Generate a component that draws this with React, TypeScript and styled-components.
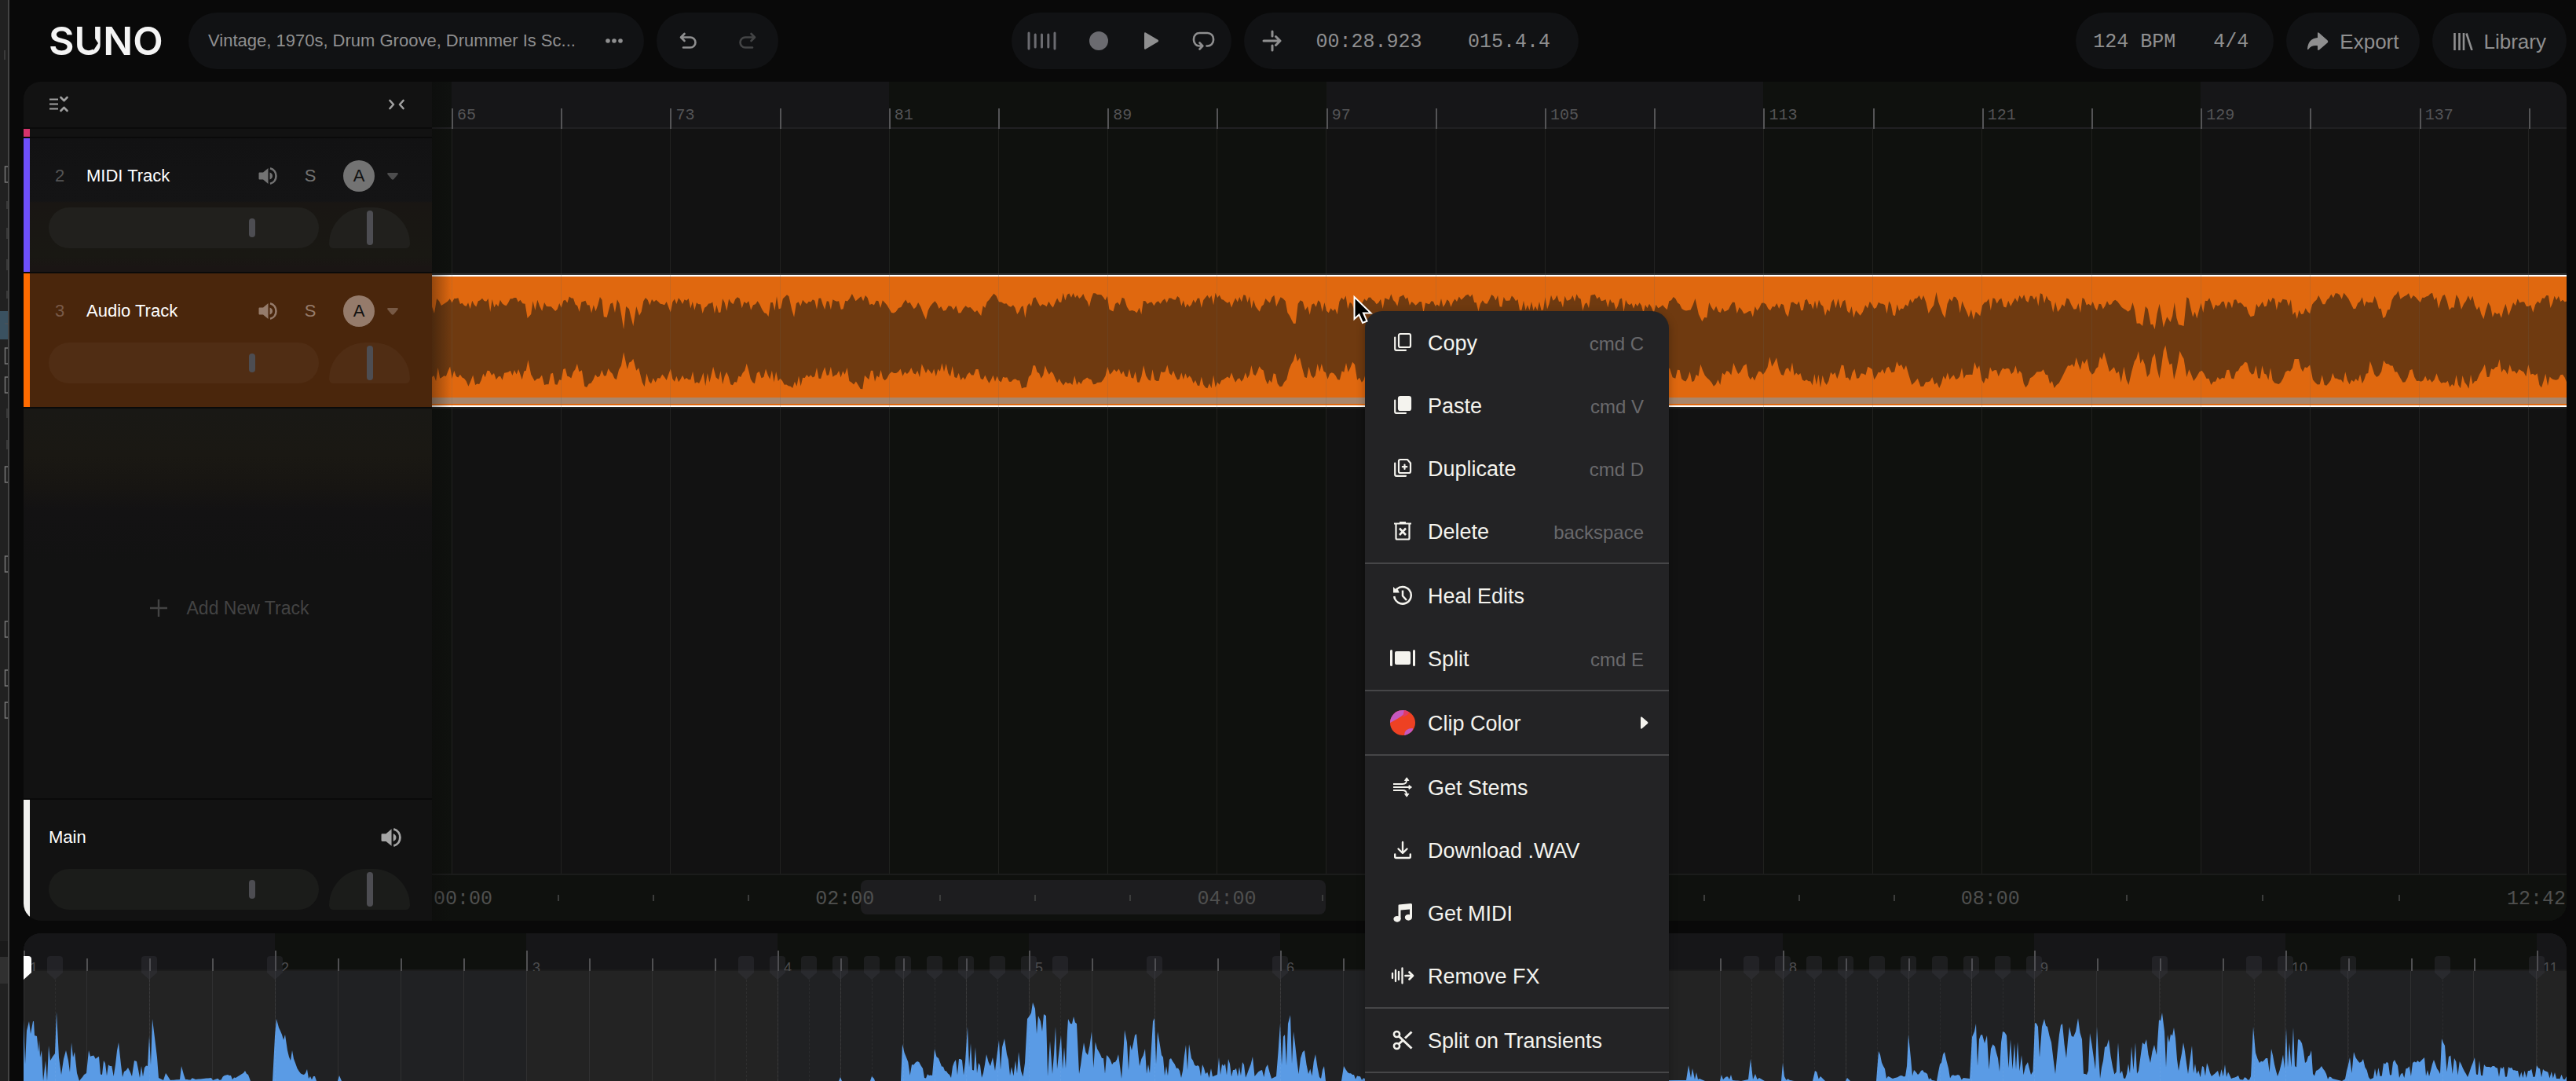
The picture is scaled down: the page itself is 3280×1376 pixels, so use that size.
import React from "react";
import styled, { createGlobalStyle, css } from "styled-components";

const sans = `"Liberation Sans", Arial, sans-serif`;
const mono = `"Liberation Mono", "Courier New", monospace`;

const GlobalStyle = createGlobalStyle`
  *, *::before, *::after { box-sizing: border-box; }
  body { margin: 0; background: #090909; font-family: ${sans}; }
  button { font: inherit; color: inherit; background: none; border: 0; padding: 0; cursor: pointer; }
  svg { display: block; }
`;

/* ---------- waveform data ---------- */

type Point = [number, number];

const read = (text: string, offset = 0, ratio = 1): Point[] =>
  text.trim().split(/\s+/).map((pair) => {
    const [x, y] = pair.split(":").map(Number);
    return [offset + x * ratio, y];
  });

const noise = (n: number) => {
  const s = Math.sin(n * 12.9898) * 43758.5453;
  return s - Math.floor(s);
};

const CLIP_TOP: Point[] = [
  ...read(
    `0:150 13:150 25:130 50:120 70:150 90:130 120:140 160:125 168:140 172:195 178:180 181:130 200:135 215:160 235:125 275:145 296:125 299:190 304:192 310:140 325:140 332:238 336:150 341:160 344:190 348:225 353:150 358:185 365:130 400:145 440:120 470:150 500:135 525:120 540:130 555:130 566:175 580:135 607:112 612:165 630:125 690:130 708:120 712:102 718:130 727:112 745:140 770:145 785:170 798:135 815:160 822:135 835:200 842:150 850:130 860:150 868:165 877:150 893:175 905:155 920:165 940:125 952:110 965:140 980:145 990:170 1010:150 1017:115 1025:150 1050:135 1070:105 1090:120 1130:115 1150:140 1165:120 1178:165 1190:155 1200:130 1225:140 1250:125 1270:140 1310:108 1330:125 1350:118 1380:125 1390:170 1400:120 1425:115 1433:130 1440:185 1450:215 1454:140 1470:150 1498:135 1505:175 1530:125 1568:130`,
    -10, 0.7653
  ),
  ...read(
    `1200:130 1232:114 1250:138 1270:142 1305:132 1322:114 1335:140 1352:112 1380:130 1410:132 1430:122 1460:118 1468:140 1478:106 1500:122 1525:145 1550:140 1567:145`
  ),
  ...read(
    `0:155 18:120 40:165 52:120 58:180 64:208 76:135 92:170 120:135 140:175 155:150 185:150 200:140 212:190 217:135 265:125 283:170 290:122 310:125 336:185 345:145 375:140 410:160 430:120 445:108 458:160 467:95 478:180 490:120 515:150 535:170 550:135 575:125 595:150 618:105 625:135 632:110 660:125 680:160 695:122 708:160 722:122 740:155 775:125 797:170 805:135 812:215 822:225 827:150 831:160 836:220 843:238 851:140 858:230 864:190 870:210 877:135 884:220 893:225 898:115 912:170 937:118 955:145 990:135 1008:190 1014:185 1018:140 1070:125 1095:180 1125:108 1172:108 1185:160 1200:115 1225:130 1236:195 1255:110 1280:100 1300:135 1317:102 1335:130 1342:105 1358:155 1362:105 1375:140 1390:110 1405:180 1417:135 1432:180 1447:140 1452:185 1460:135 1490:145 1510:118 1552:130`,
    1570, 0.7398
  ),
];

const CLIP_BOTTOM: Point[] = [
  ...read(
    `0:420 13:420 60:410 70:435 85:450 105:395 120:430 157:390 163:430 173:355 178:410 184:435 200:450 225:430 258:400 267:455 285:410 310:400 320:430 332:325 338:390 348:350 353:395 357:385 363:440 385:440 400:420 440:430 475:440 481:380 490:430 520:440 540:395 550:445 565:420 620:455 640:420 700:410 726:465 740:430 770:425 778:400 800:400 835:405 865:400 900:430 918:390 930:430 980:430 998:460 1010:410 1040:410 1060:440 1086:450 1110:430 1130:430 1148:390 1160:410 1190:440 1197:375 1205:430 1240:405 1270:425 1300:460 1330:430 1350:440 1393:390 1400:430 1420:445 1435:430 1443:370 1453:360 1465:420 1490:400 1520:430 1541:385 1560:440`,
    -10, 0.7653
  ),
  ...read(`1300:430 1400:420 1500:430 1560:410`),
  ...read(
    `8:385 18:425 50:435 65:395 80:440 95:450 110:400 130:400 140:370 147:430 165:400 188:365 200:410 212:385 240:435 278:450 300:405 330:425 353:385 360:430 385:380 395:400 415:375 425:450 435:425 445:455 460:420 472:462 490:430 525:410 537:390 545:430 585:390 600:400 621:460 640:400 655:410 670:462 690:390 722:370 735:410 759:350 765:400 785:440 790:380 798:450 808:360 822:350 830:420 843:330 851:425 858:320 865:345 876:430 886:320 893:350 898:420 910:435 920:400 940:450 955:430 975:425 1002:365 1010:410 1035:410 1060:440 1080:385 1105:385 1115:430 1135:450 1160:430 1200:445 1217:380 1225:420 1245:370 1260:400 1270:440 1290:420 1320:440 1340:440 1380:450 1397:435 1407:390 1415:420 1433:380 1450:410 1470:390 1490:410 1505:450 1530:430 1545:410 1552:440`,
    1570, 0.7398
  ),
];

const PEAKS: Point[] = read(`
0:78 4:64 7:76 9:60 12:76 13:76 14:58 17:57 19:37 20:52 21:30 23:39 25:0 28:26 30:0 32:45 34:26 37:31 40:35 42:88 45:30 48:8 51:28 54:39 57:26 61:49 63:30 65:37 68:10 71:0 77:8 80:10 83:39 87:32 94:30 102:26 110:19 117:21 121:49 124:21 128:12 133:17 138:6 141:26 144:25 148:4 150:19 154:17 158:19 160:57 164:79 167:55 170:30 172:4 178:1 181:10 187:1 199:2 201:19 204:8 219:2 239:4 241:1 260:8 270:4 282:13 286:8 289:0 317:0 320:57 322:79 325:68 329:59 333:59 336:39 340:26 342:39 346:23 351:12 357:8 361:15 365:6 371:6 373:0 400:0 402:7 405:0
1038:0 1040:5 1042:0 1078:0 1080:6 1083:3 1084:0 1117:0 1119:47 1124:30 1131:21 1138:25 1145:16 1153:7 1157:7 1160:41 1165:29 1173:13 1179:8 1185:24 1193:28 1199:24 1202:69 1206:48 1212:43 1216:23 1222:10 1226:34 1231:19 1234:30 1237:13 1242:52 1246:43 1249:54 1252:34 1258:18 1263:26 1267:37 1270:13 1275:23 1278:79 1281:83 1285:100 1288:92 1290:60 1292:83 1295:76 1297:63 1299:85 1302:83 1304:6 1307:51 1310:9 1314:69 1318:33 1321:58 1325:43 1329:63 1330:79 1333:73 1337:82 1341:73 1344:9 1350:49 1355:33 1360:63 1367:41 1375:29 1379:33 1386:21 1394:34 1398:3 1402:65 1405:49 1411:39 1417:60 1421:19 1428:41 1434:10 1438:76 1440:80 1444:63 1449:33 1455:19 1461:29 1468:16 1476:13 1480:46 1484:47 1487:29 1493:19 1501:21 1505:9 1512:16 1522:30 1528:19 1534:28 1540:14 1552:24 1558:9 1565:31 1570:9 1577:14 1584:21 1589:3 1595:6 1600:73 1606:59 1610:73 1613:84 1617:63 1621:29 1626:29 1631:39 1636:9 1645:34 1650:5 1656:19 1658:0 1678:0 1681:19 1686:11 1700:6 1708:3
2117:1 2120:20 2123:4 2125:16 2128:2 2130:11 2134:3 2141:0 2160:0 2162:8 2166:4 2174:8 2176:1 2187:0 2196:2 2199:28 2202:2 2205:9 2210:4 2217:0 2238:0 2240:23 2242:6 2249:1 2255:0 2278:0 2281:13 2288:6 2294:0 2320:0 2322:4 2326:0 2359:0 2362:38 2368:19 2374:6 2380:3 2390:7 2396:6 2398:19 2400:59 2403:29 2407:14 2412:8 2418:14 2424:9 2430:1 2436:0 2440:21 2446:37 2451:16 2455:7 2463:8 2470:4 2478:3 2481:56 2484:63 2486:73 2490:53 2494:59 2497:48 2500:58 2505:41 2510:44 2514:29 2520:63 2525:58 2530:53 2535:48 2539:50 2544:33 2549:19 2552:24 2556:8 2561:74 2565:69 2567:30 2570:69 2573:79 2577:69 2582:49 2587:9 2592:59 2596:73 2601:29 2605:69 2610:56 2613:63 2616:80 2621:53 2625:9 2631:61 2636:29 2640:69 2644:3 2650:43 2655:53 2660:18 2667:49 2672:13 2678:9 2684:44 2689:49 2693:13 2698:49 2703:53 2708:23 2713:46 2716:33 2719:78 2723:87 2726:63 2732:49 2738:68 2744:13 2750:49 2756:9 2761:45 2767:9 2774:19 2780:23 2786:6 2794:13 2803:21 2811:3 2820:7 2830:4 2836:6 2839:69 2842:36 2847:23 2855:29 2862:41 2870:6 2875:23 2881:67 2885:49 2890:68 2896:53 2901:48 2905:23 2913:39 2919:13 2926:19 2932:9 2940:3 2952:0 2958:13 2962:30 2967:37 2972:26 2979:28 2986:5 2994:16 3005:23 3019:27 3027:9 3042:23 3057:30 3063:6 3069:27 3077:9 3079:54 3083:45 3088:31 3095:29 3104:21 3112:5 3121:30 3133:21 3148:17 3164:18 3176:13 3191:13 3200:20 3210:13 3223:11 3238:6`);

/* Adds in-between samples so that the edge looks like audio, not like straight lines. */
const roughen = (points: Point[], every: number, shift: (y: number, n: number) => number): Point[] => {
  const out: Point[] = [];
  points.forEach((p, i) => {
    out.push(p);
    const next = points[i + 1];
    if (!next) return;
    const steps = Math.floor((next[0] - p[0]) / every);
    for (let s = 1; s < steps; s++) {
      const t = s / steps;
      const x = p[0] + (next[0] - p[0]) * t;
      out.push([x, shift(p[1] + (next[1] - p[1]) * t, noise(x))]);
    }
  });
  return out;
};

const toPath = (points: Point[]) => points.map(([x, y]) => `${x.toFixed(1)},${y.toFixed(1)}`).join(" ");

/* Mostly small shifts, with a deeper dip towards the centre line now and then. */
const clipEdge = (points: Point[], inward: number) =>
  roughen(points, 2.5, (y, n) => y + inward * (n > 0.82 ? 34 : (n - 0.4) * 44));
const clipShape = toPath([...clipEdge(CLIP_TOP, 1), ...clipEdge(CLIP_BOTTOM, -1).reverse()]);
const stemShape = toPath([
  [0, 0],
  ...roughen(PEAKS, 2, (y, n) => (y > 4 ? y * (n < 0.35 ? 0.3 : 0.75 + n * 0.35) : y)),
  [3238, 0],
]);

/* ---------- page frame ---------- */

const Page = styled.div`
  position: relative;
  display: grid;
  grid-template-columns: 12px minmax(0, 1fr);
  height: 100vh;
  overflow: hidden;
  background: #090909;
`;

const Edge = styled.div`
  background: #212121;
  border-right: 2px solid #444;
  overflow: hidden;
`;

const Studio = styled.main`
  display: grid;
  grid-template-rows: 104px minmax(0, 1fr) 188px;
  padding: 0 12px 0 18px;
  min-width: 0;
`;

const Header = styled.header`
  display: grid;
  grid-template-columns: 1fr auto 1fr;
  align-items: center;
  color: #8f8f90;
`;

const HeaderGroup = styled.div<{ $end?: boolean }>`
  display: flex;
  align-items: center;
  gap: 16px;
  justify-content: ${(p) => (p.$end ? "flex-end" : "flex-start")};
`;

const HeaderSpread = styled.div`
  flex: 1;
  display: flex;
  align-items: center;
  justify-content: space-between;
`;

const Logo = styled.a`
  position: relative;
  width: 146px;
  margin: 0 16px 0 32px;
  font: 600 50px/60px Inter, ${sans};
  color: #f4f4f4;
  text-decoration: none;
`;

const LogoCuts = styled.svg`
  position: absolute;
  inset: 0;
`;

const Pill = styled.div<{ $gap?: number; $pad?: string; $width?: number }>`
  display: flex;
  align-items: center;
  gap: ${(p) => p.$gap ?? 0}px;
  height: 72px;
  padding: ${(p) => p.$pad ?? "0 24px"};
  ${(p) => p.$width && css`width: ${p.$width}px;`}
  border-radius: 36px;
  background: #111214;
`;

const PillButton = styled.button`
  && {
    display: flex;
    align-items: center;
    gap: 14px;
    height: 72px;
    padding: 2px 26px 0;
    border-radius: 36px;
    background: #111214;
    font-size: 26px;
    line-height: 32px;
  }
`;

const IconButton = styled.button<{ $dim?: boolean }>`
  display: grid;
  place-items: center;
  flex: none;
  opacity: ${(p) => (p.$dim ? 0.4 : 1)};
`;

const Title = styled.span`
  flex: 1;
  min-width: 0;
  font-size: 22px;
  line-height: 32px;
  white-space: nowrap;
`;

const Readout = styled.span`
  padding-top: 3px;
  font: 25px/32px ${mono};
  white-space: pre;
`;

/* ---------- arrangement ---------- */

const Arrange = styled.section`
  display: grid;
  grid-template-columns: 520px minmax(0, 1fr);
  margin-bottom: 16px;
  border-radius: 22px;
  overflow: hidden;
  background: #121212;
`;

const Sidebar = styled.aside`
  display: flex;
  flex-direction: column;
  gap: 2px;
  min-height: 0;
  background: #0a0a0a;
`;

const SideHeader = styled.div`
  display: flex;
  align-items: center;
  justify-content: space-between;
  height: 58px;
  padding: 0 34px 0 32px;
  background: #121212;
  color: #a0a0a0;
`;

const Sliver = styled.div`
  height: 10px;
  border-left: 8px solid #d5336c;
  background: #121212;
`;

const Track = styled.article<{ $color: string; $bg?: string; $main?: boolean }>`
  border-left: 8px solid ${(p) => p.$color};
  background: ${(p) => p.$bg ?? "#121212"};
  height: ${(p) => (p.$main ? 154 : 170)}px;
  padding: 28px 28px 0 24px;
`;

const TrackTop = styled.div`
  display: flex;
  align-items: center;
  height: 40px;
  margin-bottom: 20px;
  color: #fff;
  font-size: 22px;
  line-height: 28px;
`;

const TrackNo = styled.span<{ $tint: string }>`
  width: 48px;
  padding-left: 8px;
  color: ${(p) => p.$tint};
`;

const TrackName = styled.span`
  flex: 1;
`;

const TrackTools = styled.div<{ $tint: string }>`
  display: flex;
  align-items: center;
  gap: 16px;
  padding-right: 15px;
  color: ${(p) => p.$tint};
`;

const MainTools = styled(TrackTools)`
  padding-right: 11px;
`;

const Solo = styled.button`
  width: 52px;
  text-align: center;
`;

const Arm = styled.button`
  && {
    width: 40px;
    height: 40px;
    border-radius: 50%;
    background: currentColor;
  }
  span { color: #111; font-size: 22px; }
`;

const TrackSliders = styled.div`
  display: flex;
  gap: 13px;
`;

const Slider = styled.input<{ $bg: string; $pan?: boolean }>`
  appearance: none;
  margin: 0;
  width: ${(p) => (p.$pan ? 103 : 344)}px;
  height: 52px;
  border-radius: ${(p) => (p.$pan ? "52px 52px 6px 6px" : "26px")};
  background: ${(p) => p.$bg};
  &::-webkit-slider-thumb {
    appearance: none;
    width: 8px;
    height: ${(p) => (p.$pan ? 44 : 24)}px;
    border-radius: 4px;
    background: #4d4d52;
  }
`;

const EmptyTracks = styled.div`
  flex: 1;
  display: grid;
  place-items: center;
  background: linear-gradient(#191815 0, #1a1813 60px, #171512 100px, #131213 130px, #121212 200px);
`;

const AddTrack = styled.button`
  && {
    display: flex;
    align-items: center;
    gap: 25px;
    margin-top: 12px;
    margin-left: 4px;
    color: #434343;
    font-size: 23px;
    line-height: 28px;
  }
`;

const Timeline = styled.div`
  position: relative;
  display: grid;
  grid-template-rows: 60px minmax(0, 1fr) 60px;
  min-width: 0;
`;

const EdgeShade = styled.div`
  position: absolute;
  inset: 0 auto 0 0;
  width: 25px;
  background: linear-gradient(90deg, rgba(10, 10, 10, 0.35), transparent);
  pointer-events: none;
`;

const Cells = styled.div<{ $cover?: boolean }>`
  display: flex;
  min-width: 0;
  ${(p) => p.$cover && css`position: absolute; inset: 0; pointer-events: none;`}
`;

const Lead = styled.div<{ $bg?: string; $line?: boolean }>`
  flex: none;
  width: 25px;
  background: ${(p) => p.$bg ?? "none"};
  ${(p) => p.$line && css`box-shadow: inset 0 -2px #202022;`}
`;

const BarCell = styled.div<{ $grow: number; $bg: string; $line?: string }>`
  flex: ${(p) => p.$grow} 0 0;
  min-width: 0;
  background: ${(p) => p.$bg};
  ${(p) => p.$line && css`border-left: 1px solid ${p.$line};`}
`;

const RulerCell = styled(BarCell)`
  padding-top: 34px;
  box-shadow: inset 0 -2px #202022;
`;

const RulerMark = styled.div`
  height: 26px;
  padding: 1px 0 0 5px;
  border-left: 2px solid #545456;
  color: #545456;
  font: 20px/16px ${mono};
`;

const Canvas = styled.div`
  position: relative;
  padding-top: 184px;
`;

const Lane = styled.div`
  position: relative;
  border-top: 2px solid #333;
  border-bottom: 2px solid #20211f;
`;

const Clip = styled.div`
  height: 168px;
  border: solid #fff;
  border-width: 2px 0;
  background: linear-gradient(#e0680f 154px, #a9866b 154px, #a9866b 162px, #e0680f 162px);
`;

const Overview = styled.div`
  position: relative;
  display: flex;
  align-items: center;
  border-top: 2px solid #1b1c1b;
  background: #0f110e;
  padding: 0 1px 0 2px;
`;

const View = styled.div`
  position: absolute;
  top: 6px;
  height: 44px;
  border-radius: 8px;
  background: #1d1d1f;
`;

const Minutes = styled.div<{ $last?: boolean }>`
  position: relative;
  flex: ${(p) => (p.$last ? 695 : 486)} 0 0;
  display: grid;
  align-items: center;
  grid-template-columns: ${(p) =>
    p.$last
      ? "auto 135fr 2px 172fr 2px 172fr 2px 136fr"
      : "auto 84fr 2px 120fr 2px 120fr 2px 85fr"};
`;

const Stamp = styled.span`
  position: relative;
  padding-top: 4px;
  font: 25px/32px ${mono};
  color: #4f504f;
`;

const Dash = styled.i<{ $col: number }>`
  grid-column: ${(p) => p.$col};
  height: 8px;
  background: #3c3d3c;
`;

/* ---------- clip editor ---------- */

const Editor = styled.section`
  position: relative;
  display: grid;
  grid-template-rows: 48px minmax(0, 1fr);
  border-radius: 22px 22px 0 0;
  overflow: hidden;
  background: #202123;
`;

const BeatCell = styled(BarCell)`
  display: flex;
  align-items: flex-end;
  box-shadow: inset 0 -2px #1c1c1c;
`;

const Beat = styled.div<{ $major: boolean }>`
  flex: 1;
  height: ${(p) => (p.$major ? 26 : 10)}px;
  padding: 16px 0 0 6px;
  border-left: 2px solid #505052;
  color: #4c4c4e;
  font: 18px/12px ${sans};
`;

const EditorBody = styled.div`
  position: relative;
`;

const Wave = styled.svg`
  position: absolute;
  left: 0;
  bottom: 0;
  width: 100%;
  height: 140px;
`;

const Marker = styled.div`
  position: absolute;
  top: 29px;
  bottom: 0;
  width: 20px;
  margin-left: -10px;
  color: rgba(70, 70, 80, 0.26);
  &::after {
    content: "";
    position: absolute;
    left: 10px;
    top: 30px;
    bottom: 0;
    border-left: 1px dashed rgba(255, 255, 255, 0.05);
  }
`;

const Playhead = styled.svg`
  position: absolute;
  left: 0;
  top: 29px;
`;

/* ---------- context menu ---------- */

const Menu = styled.div`
  position: absolute;
  left: 1738px;
  top: 396px;
  width: 387px;
  height: 1100px;
  border-radius: 22px;
  background: #232325;
  box-shadow: 0 4px 12px rgba(0, 0, 0, 0.3);
  overflow: hidden;
`;

const MenuGroup = styled.div`
  border-bottom: 2px solid #464648;
`;

const MenuItem = styled.button`
  && {
    display: flex;
    align-items: center;
    gap: 16px;
    width: 100%;
    height: 80px;
    padding: 0 32px;
    color: #f4f3ee;
    font-size: 27px;
    line-height: 32px;
    text-align: left;
  }
`;

const MenuIcon = styled.span`
  display: grid;
  place-items: center;
  width: 32px;
  height: 32px;
`;

const MenuText = styled.span`
  flex: 1;
  padding-top: 2px;
  white-space: nowrap;
`;

const Shortcut = styled.kbd`
  padding-top: 3px;
  font: 24px/32px ${sans};
  color: #69696c;
`;

const MoreArrow = styled.svg`
  margin-right: -6px;
`;

const Pointer = styled.svg`
  position: absolute;
  left: 1722px;
  top: 375px;
`;

/* ---------- icons ---------- */

const stroke = (width = 2) => ({
  fill: "none",
  stroke: "currentColor",
  strokeWidth: width,
  strokeLinecap: "round" as const,
  strokeLinejoin: "round" as const,
});

const Speaker = ({ size = 24 }: { size?: number }) => (
  <svg width={size} height={size} viewBox="0 0 24 24">
    <path fill="currentColor" d="M1.500 7.500h4.500l6.500-5.500v20L6 16.500H1.500Q.5 16.500.5 15.500V8.500Q.5 7.500 1.500 7.500zM14.500 7.500q3.500 1.400 3.500 4.500t-3.500 4.500z" />
    <path {...stroke(2.6)} strokeLinecap="butt" d="M15 2.200c10 2.500 10 17 0 19.600" />
  </svg>
);

const CaretDown = () => (
  <svg width="14" height="9" viewBox="0 0 14 9" opacity=".6">
    <path fill="currentColor" d="M1 0h12q1.500.5.5 2L8.500 8q-1.500 1.500-3 0L.5 2Q-.5.500 1 0z" />
  </svg>
);

const backSheet = "M2.200 6.500v14.500q0 1.800 1.800 1.800h12";

const icons: Record<string, React.ReactNode> = {
  copy: (
    <svg width="24" height="26" viewBox="0 0 24 26" {...stroke(2.2)}>
      <path d={backSheet} />
      <rect x="7" y="2" width="15" height="17" rx="2" />
    </svg>
  ),
  paste: (
    <svg width="24" height="26" viewBox="0 0 24 26" {...stroke(2.2)}>
      <path d={backSheet} />
      <rect x="7" y="2" width="15" height="17" rx="2" fill="currentColor" />
    </svg>
  ),
  duplicate: (
    <svg width="24" height="26" viewBox="0 0 24 26" {...stroke(2.2)}>
      <path d={backSheet} />
      <path d="M9 2h9l4 4.500V17q0 2-2 2H9q-2 0-2-2V4q0-2 2-2zM14.500 8.500v5.500M11.800 11.200h5.500" />
    </svg>
  ),
  trash: (
    <svg width="24" height="26" viewBox="0 0 24 26" {...stroke(2.2)} strokeLinecap="butt">
      <path d="M1 3.500h22M8 2h8M3.500 4v18q0 1.500 1.500 1.500h14q1.500 0 1.500-1.500V4" />
      <path strokeWidth="2.600" d="M8 9.500l8 8.500M16 9.500l-8 8.500" />
    </svg>
  ),
  history: (
    <svg width="26" height="26" viewBox="0 0 26 26" {...stroke(2.5)} strokeLinecap="butt">
      <path d="M2.200 14a10.800 10.800 0 1 0 2-7.600" />
      <path fill="currentColor" stroke="none" d="M1 2l2.500 2.500L7 5.500l1.800 4H1z" />
      <path d="M13 6.500v7l5 5.500" />
    </svg>
  ),
  split: (
    <svg width="32" height="22" viewBox="0 0 32 22" fill="currentColor">
      <rect width="3" height="21" rx="1.500" />
      <rect x="29" width="3" height="21" rx="1.500" />
      <rect x="6" y="2" width="20" height="17" rx="2" />
    </svg>
  ),
  color: (
    <svg width="32" height="32" viewBox="0 0 32 32">
      <defs>
        <clipPath id="dot"><circle cx="16" cy="16" r="16" /></clipPath>
      </defs>
      <g clipPath="url(#dot)">
        <rect width="32" height="32" fill="#ee4123" />
        <path fill="#c558c0" d="M-1-1h23q-2 5-8 9T0 16z" />
        <path fill="#e23a63" d="M18 0h8l-4 6-6 3z" />
        <path fill="#c558c0" d="M18 32q0-9 11-9l-1 9z" />
      </g>
    </svg>
  ),
  stems: (
    <svg width="24" height="26" viewBox="0 0 24 26" {...stroke(1.8)} strokeLinecap="butt">
      <path d="M0 9h12q5 0 5-5M0 13h21M0 17h12q5 0 5 5" />
      <path fill="currentColor" strokeWidth="1" d="M14.500 4.500L17.200.800l2.600 3.700zM20 10.500l3.500 2.500-3.500 2.500zM14.500 21.500l2.700 3.700 2.600-3.700z" />
    </svg>
  ),
  download: (
    <svg width="24" height="24" viewBox="0 0 24 24" {...stroke(2.4)}>
      <path d="M12 2v13.500M6.500 10.500L12 16l5.500-5.500" />
      <path d="M2.200 17.500v3q0 1.500 1.500 1.500h16.600q1.500 0 1.500-1.500v-3" />
    </svg>
  ),
  midi: (
    <svg width="24" height="24" viewBox="0 0 24 24" fill="currentColor">
      <path d="M7 1.500L22.500 0Q24 0 24 1.500V17h-3V7.500L9.500 8.500V20h-3V3q0-1.300.5-1.500z" />
      <ellipse cx="5" cy="19.800" rx="4.600" ry="3.900" />
      <ellipse cx="19.400" cy="17.800" rx="4.600" ry="3.900" />
    </svg>
  ),
  fx: (
    <svg width="30" height="22" viewBox="0 0 30 22" {...stroke(2.3)}>
      <path d="M2 8v6M6 4v14M10 6v10M14.500 1.500v19" />
      <path strokeWidth="2.700" d="M18.500 11H28M23.500 6.500L28 11l-4.500 4.500" />
    </svg>
  ),
  scissors: (
    <svg width="26" height="26" viewBox="0 0 26 26" {...stroke(2.5)} strokeLinecap="butt">
      <circle cx="5.500" cy="5.500" r="3.600" />
      <circle cx="5.500" cy="20.500" r="3.600" />
      <path d="M8 8l16.500 15.500M8 18l6-5.500M16 10.500L24.500 2.500" strokeWidth="3" />
    </svg>
  ),
};

/* ---------- content ---------- */

const MENU: { label: string; icon: string; keys?: string; more?: boolean }[][] = [
  [
    { label: "Copy", icon: "copy", keys: "cmd C" },
    { label: "Paste", icon: "paste", keys: "cmd V" },
    { label: "Duplicate", icon: "duplicate", keys: "cmd D" },
    { label: "Delete", icon: "trash", keys: "backspace" },
  ],
  [
    { label: "Heal Edits", icon: "history" },
    { label: "Split", icon: "split", keys: "cmd E" },
  ],
  [{ label: "Clip Color", icon: "color", more: true }],
  [
    { label: "Get Stems", icon: "stems" },
    { label: "Download .WAV", icon: "download" },
    { label: "Get MIDI", icon: "midi" },
    { label: "Remove FX", icon: "fx" },
  ],
  [{ label: "Split on Transients", icon: "scissors" }],
];

/* One cell for every four bars; the last one is cut off by the window. */
const CELLS = Array.from({ length: 20 }, (_, i) => ({
  bar: 65 + i * 4,
  grow: i === 19 ? 48 : 139,
  labelled: i % 2 === 0,
  light: Math.floor(i / 4) % 2 === 0,
}));

const BEATS = Array.from({ length: 41 }, (_, i) => ({
  grow: i === 40 ? 38 : 80,
  major: i % 4 === 0,
  bar: i / 4 + 1,
  light: Math.floor(i / 4) % 2 === 0,
}));

const MARKERS = [1, 4, 8, 23, 24, 25, 26, 27, 28, 29, 30, 31, 32, 33, 36, 40, 55, 56, 57, 58, 59, 60, 61, 62, 63, 64, 68, 71, 72, 74, 77, 80];

const TRACKS = [
  {
    no: 2, name: "MIDI Track", color: "#6e50fa", dim: "#555", tint: "#737373", slider: "#21201d",
    bg: "linear-gradient(#121213 0, #141415 80px, #191613 82px, #191813 150px, #1a1514 165px)",
  },
  { no: 3, name: "Audio Track", color: "#ff6b00", dim: "#795a48", tint: "#957b6b", slider: "#502d14", bg: "#4a260c" },
];

const EDGE_GLYPHS = [212, 443, 480, 594, 708, 791, 853, 894];

export default function App() {
  return (
    <Page>
      <GlobalStyle />
      <Edge aria-hidden="true">
        <svg width="10" height="1376">
          <rect y="396" width="10" height="36" fill="#3a5160" />
          <rect y="1198" width="10" height="20" fill="#1a1a1a" />
          <rect y="1218" width="10" height="34" fill="#303030" />
          <path d="M6 64v12M6 412h4M9 256v10M9 290v14M9 330v14M9 370v10M9 520v12M9 560v12" stroke="#555" />
          {EDGE_GLYPHS.map((y) => (
            <path key={y} d={`M10 ${y}H6.500v20H10`} fill="none" stroke="#777" strokeWidth="1.500" />
          ))}
        </svg>
      </Edge>

      <Studio>
        <Header>
          <HeaderGroup>
            <Logo href="#" aria-label="SUNO">
              SUNO
              <LogoCuts width="146" height="60" viewBox="0 0 146 60" fill="#090909">
                <path d="M59 18v9l4 6-6 9q-3-6-1-10z" />
              </LogoCuts>
            </Logo>
            <Pill $width={580} $pad="0 26px 0 25px">
              <Title>Vintage, 1970s, Drum Groove, Drummer Is Sc...</Title>
              <IconButton aria-label="Project options">
                <svg width="24" height="8" fill="currentColor">
                  <circle cx="4" cy="4" r="2.800" /><circle cx="12" cy="4" r="2.800" /><circle cx="20" cy="4" r="2.800" />
                </svg>
              </IconButton>
            </Pill>
            <Pill $width={155} $pad="0 28px" $gap={50}>
              <IconButton aria-label="Undo">
                <svg width="25" height="25" viewBox="0 0 25 25" {...stroke(2.6)}>
                  <path d="M7.500 3L3 7.500 7.500 12M3.500 7.500H15a6.500 6.500 0 0 1 0 13H6" />
                </svg>
              </IconButton>
              <IconButton aria-label="Redo" $dim>
                <svg width="25" height="25" viewBox="0 0 25 25" {...stroke(2.6)}>
                  <path d="M17.500 3L22 7.500 17.500 12M21.500 7.500H10a6.500 6.500 0 0 0 0 13H19" />
                </svg>
              </IconButton>
            </Pill>
          </HeaderGroup>

          <HeaderGroup>
            <Pill $width={280} $pad="0 21px 0 20px">
              <HeaderSpread>
                <IconButton aria-label="Metronome">
                  <svg width="37" height="24" viewBox="0 0 37 24" {...stroke(3)} stroke="#6b6b70">
                    <path d="M2 2v20M10.200 4v16M18.500 4v16M26.800 4v16M35 2v20" />
                  </svg>
                </IconButton>
                <IconButton aria-label="Record">
                  <svg width="28" height="24"><circle cx="12" cy="12" r="12" fill="#6b6b70" /></svg>
                </IconButton>
                <IconButton aria-label="Play">
                  <svg width="20" height="24" viewBox="0 0 20 24" fill="currentColor">
                    <path d="M1 2.500Q1 .8 2.800 1.500L18.500 10.800Q20 12 18.500 13.200L2.800 22.500Q1 23.200 1 21.500z" />
                  </svg>
                </IconButton>
                <IconButton aria-label="Loop">
                  <svg width="29" height="24" viewBox="0 0 29 24" {...stroke(2.600)}>
                    <path d="M18.500 18.500h1a7.500 7.500 0 0 0 7.500-7.500v-1.500a7.500 7.500 0 0 0-7.500-7.500H9.500A7.500 7.500 0 0 0 2 9.500v1.500a7.500 7.500 0 0 0 7.500 7.500h3" />
                    <path d="M9.500 14.500l3.800 4-3.800 4" />
                  </svg>
                </IconButton>
              </HeaderSpread>
            </Pill>
            <Pill $width={426} $pad="0 36px 0 22px">
              <HeaderSpread>
                <IconButton aria-label="Follow playhead">
                  <svg width="26" height="28" viewBox="0 0 26 28" {...stroke(3)}>
                    <path d="M14 2v6M14 20v6M3 14h20M18.500 8.500L24 14l-5.500 5.500" />
                  </svg>
                </IconButton>
                <Readout>00:28.923</Readout>
                <Readout>{" 015.4.4"}</Readout>
              </HeaderSpread>
            </Pill>
          </HeaderGroup>

          <HeaderGroup $end>
            <Pill $width={252} $pad="0 32px 0 22px">
              <HeaderSpread>
                <Readout>124 BPM</Readout>
                <Readout>4/4</Readout>
              </HeaderSpread>
            </Pill>
            <PillButton>
              <svg width="28" height="24" viewBox="0 0 28 24" fill="currentColor">
                <path d="M14 1.500Q14-.5 16 1l10.500 9.200Q28 12 26.500 13.500L16 22.500q-2 1.300-2-.8v-4.500Q6 16.500 2.500 21.500q-1.500 1.500-1.500-.5Q2 8 14 7z" />
              </svg>
              Export
            </PillButton>
            <PillButton>
              <svg width="26" height="22" viewBox="0 0 26 22" {...stroke(2.600)} strokeLinecap="butt">
                <path d="M2.500 0v22M8.500 0v22M14 0v22M17.500.5L24.500 22" />
              </svg>
              Library
            </PillButton>
          </HeaderGroup>
        </Header>

        <Arrange>
          <Sidebar>
            <SideHeader>
              <IconButton aria-label="Track height">
                <svg width="25" height="22" viewBox="0 0 25 22" {...stroke(2.600)}>
                  <path strokeLinecap="butt" strokeWidth="2.200" d="M1 4.500h11M1 10.500h11M1 16.500h11" />
                  <path d="M15.500 2l4 4.200 4-4.200M15.500 19l4-4.200 4 4.200" />
                </svg>
              </IconButton>
              <IconButton aria-label="Collapse tracks">
                <svg width="22" height="14" viewBox="0 0 22 14" {...stroke(2.600)}>
                  <path d="M2.500 2l4.500 5-4.500 5M19.500 2L15 7l4.500 5" />
                </svg>
              </IconButton>
            </SideHeader>
            <Sliver />
            {TRACKS.map((t) => (
              <Track key={t.no} $color={t.color} $bg={t.bg}>
                <TrackTop>
                  <TrackNo $tint={t.dim}>{t.no}</TrackNo>
                  <TrackName>{t.name}</TrackName>
                  <TrackTools $tint={t.tint}>
                    <IconButton aria-label="Mute"><Speaker /></IconButton>
                    <Solo>S</Solo>
                    <Arm><span>A</span></Arm>
                    <IconButton aria-label="More"><CaretDown /></IconButton>
                  </TrackTools>
                </TrackTop>
                <TrackSliders>
                  <Slider type="range" aria-label={`${t.name} volume`} defaultValue={76} $bg={t.slider} />
                  <Slider type="range" aria-label={`${t.name} pan`} defaultValue={50} $pan $bg={t.slider} />
                </TrackSliders>
              </Track>
            ))}
            <EmptyTracks>
              <AddTrack>
                <svg width="22" height="22" viewBox="0 0 22 22" {...stroke(2.400)} strokeLinecap="butt">
                  <path d="M11 0v22M0 11h22" />
                </svg>
                Add New Track
              </AddTrack>
            </EmptyTracks>
            <Track $main $color="#f1f1ef">
              <TrackTop>
                <TrackName>Main</TrackName>
                <MainTools $tint="#a5a5a5">
                  <IconButton aria-label="Mute main"><Speaker size={26} /></IconButton>
                </MainTools>
              </TrackTop>
              <TrackSliders>
                <Slider type="range" aria-label="Main volume" defaultValue={76} $bg="#1b1c1a" />
                <Slider type="range" aria-label="Main pan" defaultValue={50} $pan $bg="#1b1c1a" />
              </TrackSliders>
            </Track>
          </Sidebar>

          <Timeline>
            <Cells>
              <Lead $bg="#0f110f" $line />
              {CELLS.map((c) => (
                <RulerCell key={c.bar} $grow={c.grow} $bg={c.light ? "#161618" : "#0f110e"}>
                  <RulerMark>{c.labelled && c.bar}</RulerMark>
                </RulerCell>
              ))}
            </Cells>
            <Canvas>
              <Cells $cover>
                <Lead $bg="#0f110e" />
                {CELLS.map((c) => (
                  <BarCell key={c.bar} $grow={c.grow} $bg={c.light ? "#121212" : "#0f110e"} />
                ))}
              </Cells>
              <Lane>
                <Clip>
                  <svg width="100%" height="164" viewBox="0 36 2718 492" preserveAspectRatio="none">
                    <polygon points={clipShape} fill="#6f3a10" />
                  </svg>
                </Clip>
              </Lane>
              <Cells $cover>
                <Lead />
                {CELLS.map((c) => (
                  <BarCell key={c.bar} $grow={c.grow} $bg="none" $line="rgba(100, 100, 96, 0.2)" />
                ))}
              </Cells>
            </Canvas>
            <Overview>
              <View style={{ left: `${(546 / 2718) * 100}%`, width: `${(592 / 2718) * 100}%` }} />
              {["00:00", "02:00", "04:00", "06:00", "08:00"].map((t) => (
                <Minutes key={t} $last={t === "08:00"}>
                  <Stamp>{t}</Stamp>
                  <Dash $col={3} /><Dash $col={5} /><Dash $col={7} />
                </Minutes>
              ))}
              <Stamp>12:42</Stamp>
            </Overview>
            <EdgeShade />
          </Timeline>
        </Arrange>

        <Editor>
          <Cells>
            {BEATS.map((b) => (
              <BeatCell key={b.bar} $grow={b.grow} $bg={b.light ? "#161618" : "#0f110e"}>
                <Beat $major={b.major}>{b.major && b.bar}</Beat>
              </BeatCell>
            ))}
          </Cells>
          <EditorBody>
            <Cells $cover>
              {BEATS.map((b) => (
                <BarCell key={b.bar} $grow={b.grow} $bg={b.light ? "#232323" : "#202123"} $line="#303031" />
              ))}
            </Cells>
            <Wave viewBox="0 0 3238 140" preserveAspectRatio="none">
              <polygon points={stemShape} transform="matrix(1 0 0 -1 0 140)" fill="#5a9be5" />
            </Wave>
          </EditorBody>
          {MARKERS.map((m) => (
            <Marker key={m} style={{ left: `${((m * 40) / 3238) * 100}%` }}>
              <svg width="20" height="30" viewBox="0 0 20 30">
                <path fill="currentColor" d="M0 4q0-4 4-4h12q4 0 4 4v17l-10 9L0 21z" />
              </svg>
            </Marker>
          ))}
          <Playhead width="10" height="30" viewBox="10 0 10 30">
            <path fill="#fff" d="M0 0h16q4 0 4 4v17l-10 9z" />
          </Playhead>
        </Editor>
      </Studio>

      <Menu role="menu">
        {MENU.map((group) => (
          <MenuGroup key={group[0].label}>
            {group.map((item) => (
              <MenuItem key={item.label} role="menuitem">
                <MenuIcon>{icons[item.icon]}</MenuIcon>
                <MenuText>{item.label}</MenuText>
                {item.keys && <Shortcut>{item.keys}</Shortcut>}
                {item.more && (
                  <MoreArrow width="10" height="16" viewBox="0 0 10 16" fill="currentColor">
                    <path d="M0 1.500Q0 0 1.500.5L9 7q1 1 0 2L1.500 15.500Q0 16 0 14.500z" />
                  </MoreArrow>
                )}
              </MenuItem>
            ))}
          </MenuGroup>
        ))}
      </Menu>
      <Pointer width="28" height="40" viewBox="0 0 28 40" aria-hidden="true">
        <path d="M2.500 3v28l6-5.500 4.500 10.500 5.500-2.300L14 23.500h9.500z" fill="#000" stroke="#fff" strokeWidth="2" />
      </Pointer>
    </Page>
  );
}
